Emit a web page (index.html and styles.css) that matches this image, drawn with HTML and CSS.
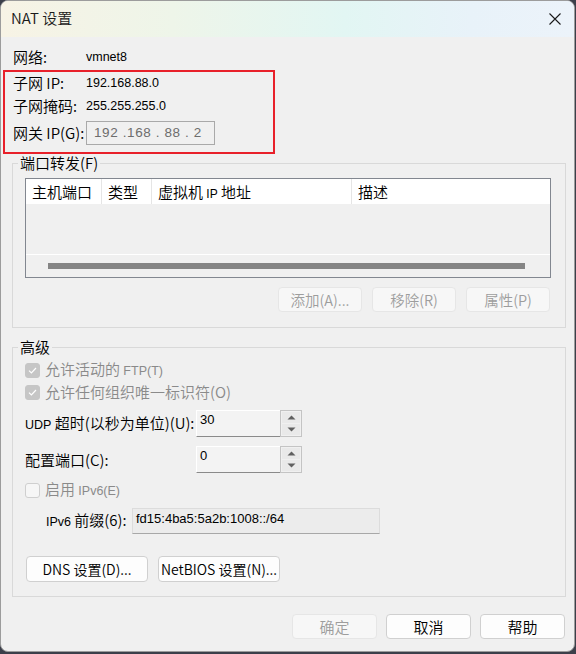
FILE: index.html
```html
<!DOCTYPE html>
<html lang="zh-CN">
<head>
<meta charset="utf-8">
<title>NAT 设置</title>
<link rel="stylesheet" href="styles.css">
</head>
<body>
<div class="window">
  <header class="titlebar">
    <span class="title">NAT 设置</span>
    <span class="close" aria-label="关闭">
      <svg width="12" height="12" viewBox="0 0 12 12"><path d="M0.5 0.5L11.5 11.5M11.5 0.5L0.5 11.5" stroke="#1a1a1a" stroke-width="1.1" fill="none"/></svg>
    </span>
  </header>
  <main class="content">
    <section class="info">
      <div class="row row-net"><span class="lbl">网络:</span><span class="val">vmnet8</span></div>
      <div class="highlight">
        <div class="row row-a"><span class="lbl">子网 IP:</span><span class="val">192.168.88.0</span></div>
        <div class="row row-b"><span class="lbl">子网掩码:</span><span class="val">255.255.255.0</span></div>
        <div class="row row-c"><span class="lbl">网关 IP(G):</span><div class="ipbox">192 .168 . 88 . 2</div></div>
      </div>
    </section>

    <fieldset class="group group-pf">
      <legend>端口转发(F)</legend>
      <div class="listview">
        <div class="lv-head">
          <div class="col c1">主机端口</div>
          <div class="col c2">类型</div>
          <div class="col c3">虚拟机 <span class="sm">IP</span> 地址</div>
          <div class="col c4">描述</div>
        </div>
        <div class="lv-body"></div>
        <div class="lv-scroll"><div class="thumb"></div></div>
      </div>
      <div class="btnrow pf-btns">
        <button class="btn dis">添加(A)...</button>
        <button class="btn dis">移除(R)</button>
        <button class="btn dis">属性(P)</button>
      </div>
    </fieldset>

    <fieldset class="group group-adv">
      <legend>高级</legend>
      <div class="chk-row dis-text">
        <span class="chk checked"><svg width="9" height="7" viewBox="0 0 9 7"><path d="M1 3.6L3.4 6L8 1" stroke="#fff" stroke-width="1.2" fill="none"/></svg></span>
        <span>允许活动的 <span class="sm">FTP(T)</span></span>
      </div>
      <div class="chk-row dis-text">
        <span class="chk checked"><svg width="9" height="7" viewBox="0 0 9 7"><path d="M1 3.6L3.4 6L8 1" stroke="#fff" stroke-width="1.2" fill="none"/></svg></span>
        <span>允许任何组织唯一标识符(O)</span>
      </div>
      <div class="field-row udp">
        <span class="flbl"><span class="sm">UDP</span> 超时(以秒为单位)(U):</span>
        <div class="spin">
          <div class="spin-edit">30</div>
          <div class="spin-btns">
            <span class="sb up"><svg width="9" height="5" viewBox="0 0 9 5"><path d="M0.5 4.5L4.5 0.5L8.5 4.5Z" fill="#606060"/></svg></span>
            <span class="sb down"><svg width="9" height="5" viewBox="0 0 9 5"><path d="M0.5 0.5L4.5 4.5L8.5 0.5Z" fill="#606060"/></svg></span>
          </div>
        </div>
      </div>
      <div class="field-row port">
        <span class="flbl">配置端口(C):</span>
        <div class="spin">
          <div class="spin-edit">0</div>
          <div class="spin-btns">
            <span class="sb up"><svg width="9" height="5" viewBox="0 0 9 5"><path d="M0.5 4.5L4.5 0.5L8.5 4.5Z" fill="#606060"/></svg></span>
            <span class="sb down"><svg width="9" height="5" viewBox="0 0 9 5"><path d="M0.5 0.5L4.5 4.5L8.5 0.5Z" fill="#606060"/></svg></span>
          </div>
        </div>
      </div>
      <div class="chk-row ipv6 dis-text">
        <span class="chk"></span>
        <span>启用 <span class="sm">IPv6(E)</span></span>
      </div>
      <div class="field-row prefix">
        <span class="plbl"><span class="sm">IPv6</span> 前缀(6):</span>
        <div class="prefix-box">fd15:4ba5:5a2b:1008::/64</div>
      </div>
      <div class="btnrow adv-btns">
        <button class="btn wide">DNS 设置(D)...</button>
        <button class="btn wide">NetBIOS 设置(N)...</button>
      </div>
    </fieldset>

    <footer class="btnrow dlg-btns">
      <button class="btn dis">确定</button>
      <button class="btn">取消</button>
      <button class="btn">帮助</button>
    </footer>
  </main>
</div>
</body>
</html>
```

FILE: styles.css
```css
* { box-sizing: border-box; }

html, body {
  margin: 0;
  padding: 0;
}

body {
  width: 576px;
  height: 654px;
  background: #3c3f4a;
  font-family: "Noto Sans CJK SC", "Noto Sans", sans-serif;
  font-size: 15px;
  font-weight: 350;
  color: #000;
  overflow: hidden;
}

.window {
  width: 575px;
  height: 652px;
  background: #f0f0f0;
  border: 1px solid #9c9c9c;
  border-radius: 8px;
  overflow: hidden;
}

.titlebar {
  height: 36px;
  display: flex;
  align-items: center;
  justify-content: space-between;
  padding: 0 13px 0 10px;
  background: linear-gradient(90deg, #f7f3e5 0%, #eef5e9 30%, #e2f6f3 60%, #e8f2f9 82%, #ecf3fa 100%);
}

.title {
  font-size: 15px;
  line-height: 20px;
  color: #1a1a1a;
  margin-top: -2px;
}

.close {
  display: flex;
  width: 12px;
  height: 12px;
}

.content {
  padding: 0 8px 0 11px;
}

/* info block */
.info {
  padding-top: 9px;
}

.row {
  display: flex;
  align-items: center;
}

.lbl {
  width: 73px;
  line-height: 20px;
  white-space: nowrap;
}

.val {
  font-family: "Liberation Sans", sans-serif;
  font-weight: 400;
  font-size: 12.5px;
  line-height: 16px;
}

.row-net { height: 22px; margin-bottom: 2px; padding-left: 1px; }

.highlight {
  width: 272px;
  margin-left: -9px;
  border: 2px solid #e8202a;
  padding: 0 0 4px 8px;
}

.row-a { height: 22px; }
.row-b { height: 24px; }
.row-c { height: 30px; }

.ipbox {
  width: 129px;
  height: 24px;
  border: 1px solid #a9a9a9;
  background: #f0f0f0;
  padding-left: 7px;
  font-family: "Liberation Sans", sans-serif;
  font-weight: 400;
  font-size: 13.5px;
  letter-spacing: 0.6px;
  line-height: 22px;
  color: #6d6d6d;
  white-space: pre;
}

.sm {
  font-family: "Liberation Sans", sans-serif;
  font-weight: 400;
  font-size: 12.5px;
}

/* group boxes */
.group {
  margin: 0;
  border: 1px solid #d9d9d9;
  padding: 6px 14px 15px 12px;
  min-width: 0;
}

.group legend {
  margin-left: -7px;
  padding: 0 2px;
  line-height: 18px;
  font-size: 15px;
}

.group-adv {
  margin-top: 10px;
  padding: 3px 14px 14px 12px;
}

/* list view */
.listview {
  height: 100px;
  border: 1px solid #828790;
  display: flex;
  flex-direction: column;
}

.lv-head {
  height: 25px;
  background: #fff;
  display: flex;
}

.col {
  padding-left: 6px;
  line-height: 25px;
  border-right: 1px solid #e5e5e5;
  white-space: nowrap;
}

.col .sm { font-size: 12px; }

.c1 { width: 76px; }
.c2 { width: 50px; }
.c3 { width: 200px; }
.c4 { flex: 1; border-right: 0; }

.lv-body {
  height: 51px;
  border-bottom: 1px solid #fff;
}

.lv-scroll {
  flex: 1;
  display: flex;
  align-items: center;
  padding: 0 25px 0 22px;
}

.thumb {
  height: 6px;
  width: 100%;
  background: #858585;
}

/* buttons */
.btnrow {
  display: flex;
  gap: 10px;
}

.pf-btns {
  margin-top: 9px;
  justify-content: flex-end;
  padding-right: 1px;
}

.btn {
  width: 84px;
  height: 25px;
  padding: 0;
  border: 1px solid #d0d0d0;
  border-radius: 4px;
  background: #fdfdfd;
  font-family: "Noto Sans CJK SC", sans-serif;
  font-weight: 350;
  font-size: 15px;
  line-height: 22px;
  color: #000;
}

.btn.dis {
  background: #f7f7f7;
  border-color: #e6e6e6;
  color: #9d9d9d;
}

.pf-btns .btn { font-size: 14.5px; }

/* advanced */
.chk-row {
  height: 22px;
  display: flex;
  align-items: center;
  line-height: 20px;
}

.dis-text { color: #8a8a8a; }

.chk {
  width: 15px;
  height: 15px;
  margin-right: 5px;
  border-radius: 3px;
  border: 1px solid #cfcfcf;
  background: #f6f6f6;
  display: flex;
  align-items: center;
  justify-content: center;
}

.chk.checked {
  background: #c6c6c6;
  border-color: #c6c6c6;
}

.field-row {
  display: flex;
  align-items: center;
}

.flbl {
  width: 171px;
  line-height: 20px;
  white-space: nowrap;
}

.udp { margin-top: 7px; }
.port { margin-top: 9px; }

.spin {
  width: 106px;
  height: 27px;
  display: flex;
}

.spin-edit {
  flex: 1;
  background: #f3f3f3;
  border-top: 1px solid #fff;
  border-left: 1px solid #fff;
  border-bottom: 1px solid #8a8a8a;
  padding: 1px 0 0 3px;
  font-family: "Liberation Sans", sans-serif;
  font-weight: 400;
  font-size: 13px;
  line-height: 16px;
}

.spin-btns {
  width: 22px;
  border: 1px solid #c4c4c4;
  display: flex;
  flex-direction: column;
  padding: 1px;
  gap: 1px;
}

.sb {
  flex: 1;
  background: #e9e9e9;
  display: flex;
  align-items: center;
  justify-content: center;
}

.ipv6 {
  margin-top: 7px;
  height: 20px;
}

.prefix {
  margin-top: 8px;
}

.plbl {
  width: 107px;
  padding-left: 21px;
  line-height: 20px;
  white-space: nowrap;
}

.prefix-box {
  width: 248px;
  height: 26px;
  background: #ececec;
  border: 1px solid #dcdcdc;
  border-bottom-color: #a8a8a8;
  padding: 1px 0 0 3px;
  font-family: "Liberation Sans", sans-serif;
  font-weight: 400;
  font-size: 13px;
  line-height: 17px;
}

.adv-btns {
  margin-top: 22px;
  padding-left: 1px;
}

.btn.wide {
  width: 122px;
  height: 26px;
  font-size: 14px;
}

.dlg-btns {
  margin-top: 17px;
  justify-content: flex-end;
  gap: 9px;
  padding-right: 1px;
}

.dlg-btns .btn { width: 85px; }
```
